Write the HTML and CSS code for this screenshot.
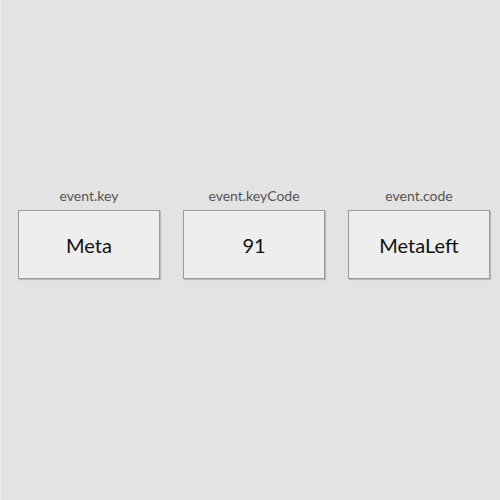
FILE: index.html
```html
<!DOCTYPE html>
<html>
<head>
<meta charset="utf-8">
<link rel="stylesheet" href="styles.css">
</head>
<body>
<div class="page">
  <div class="row">
    <div class="item">
      <div class="label">event.key</div>
      <div class="box">Meta</div>
    </div>
    <div class="item">
      <div class="label">event.keyCode</div>
      <div class="box">91</div>
    </div>
    <div class="item">
      <div class="label">event.code</div>
      <div class="box">MetaLeft</div>
    </div>
  </div>
</div>
</body>
</html>
```
FILE: styles.css
```css
html, body {
  margin: 0;
  padding: 0;
  background: #e3e3e3;
}
body {
  width: 500px;
  height: 500px;
  border-left: 1px solid #ececec;
  box-sizing: border-box;
  font-family: "Lato", "Open Sans", sans-serif;
}
.page {
  padding-top: 186px;
  padding-left: 17px;
}
.row {
  display: flex;
  gap: 23px;
}
.item {
  width: 142px;
  display: flex;
  flex-direction: column;
  align-items: center;
}
.label {
  font-size: 14px;
  color: #555;
  line-height: 20px;
  margin-bottom: 4px;
}
.box {
  width: 142px;
  height: 69px;
  box-sizing: border-box;
  background: #eeeeee;
  border: 1px solid #9a9a9a;
  box-shadow: 1px 1px 1px rgba(0,0,0,0.18);
  display: flex;
  align-items: center;
  justify-content: center;
  font-size: 20px;
  color: #111;
}
```
